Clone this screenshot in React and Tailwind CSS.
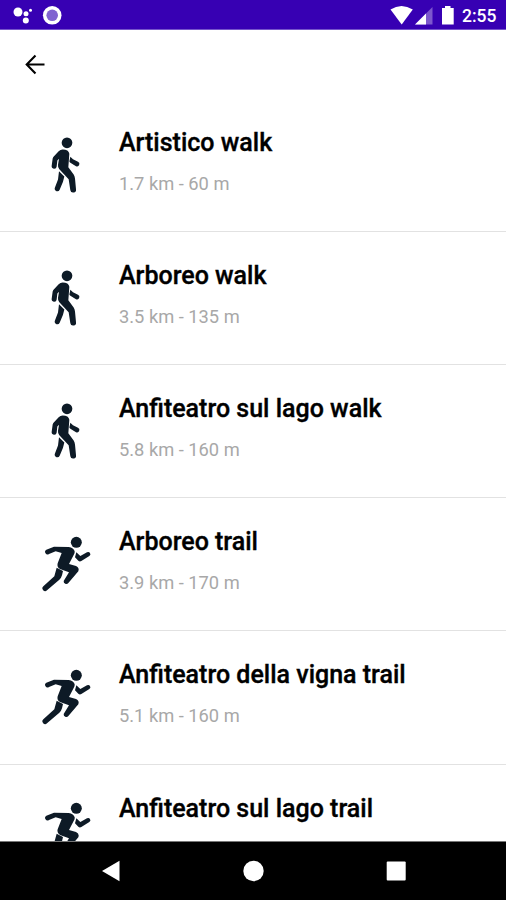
import React from "react";

const routes = [
  { name: "Artistico walk", info: "1.7 km - 60 m", kind: "walk" },
  { name: "Arboreo walk", info: "3.5 km - 135 m", kind: "walk" },
  { name: "Anfiteatro sul lago walk", info: "5.8 km - 160 m", kind: "walk" },
  { name: "Arboreo trail", info: "3.9 km - 170 m", kind: "trail" },
  { name: "Anfiteatro della vigna trail", info: "5.1 km - 160 m", kind: "trail" },
  { name: "Anfiteatro sul lago trail", kind: "trail" },
];

function WalkIcon() {
  return (
    <svg viewBox="0 2.5 210 240" className="h-20 w-[70px]" fill="#0d1a26">
      <circle cx="111" cy="53" r="16" />
      <path
        d="M98 73 Q116 73 118 86 L115 126 L131 148 Q134 153 135 160 L138 192 A8.500 8.500 0 0 1 121 195 L116 162 L88 132 Q83 127 84 119 L87 101 L82 106 L80 124 A7 7 0 0 1 65 122 L68 100 Q69 96 72 93 L86 78 Q91 73 98 73 Z"
      />
      <path d="M87 138 L103 154 L99 170 L89 194 A8 8 0 0 1 74 189 L84 163 Z" />
      <path d="M121 95 L129 102 L144 110 A7 7 0 0 1 138 123 L120 112 L118 109 Z" />
    </svg>
  );
}

function RunIcon() {
  return (
    <svg viewBox="0 0 210 240" className="h-20 w-[70px]" fill="#0d1a26">
      <circle cx="139" cy="52" r="16.500" />
      <path
        d="M72 65 L116 66 Q131 68 134 79 Q135 84 131 90 L117 117 L138 123 Q149 128 145 139 L115 174 A8 8 0 0 1 101 168 L117 142 L90 132 Q80 127 83 115 L95 84 L77 79 L57 87 A7 7 0 0 1 49 74 Z"
      />
      <path d="M80 128 L99 138 L96 151 Q94 159 88 164 L51 196 A8 8 0 0 1 40 184 L73 154 Z" />
      <path d="M139 82 L151 93 L171 82 A6.500 6.500 0 0 1 178 93 L154 108 Q149 111 145 107 L135 97 Z" />
    </svg>
  );
}

function StatusBar() {
  return (
    <header className="flex h-[30px] shrink-0 justify-between border-b border-[#7655cb] bg-[#3700b3]">
      <svg viewBox="0 0 120 30" className="h-[30px] w-[120px]" fill="#fff">
        <circle cx="18" cy="12" r="4.500" />
        <circle cx="26" cy="13.700" r="2.500" />
        <circle cx="30.500" cy="10.300" r="1.500" />
        <circle cx="25.800" cy="20.500" r="3" />
        <circle cx="52.200" cy="15.300" r="9.300" />
        <circle cx="52.200" cy="15.300" r="5.800" fill="#8063d0" />
      </svg>
      <div className="flex">
        <svg viewBox="380 0 82 30" className="h-[30px] w-[82px]" fill="#fff">
          <path d="M390.500 9.500 Q401.500 2.500 412.800 9.500 L401.700 24.500 Z" />
          <path d="M432.500 7 V24.500 H415 Z" fill="#7d57cd" />
          <path d="M426 13.500 V24.500 H415 Z" />
          <path d="M445 6 H450.500 V8 H453.700 V24.500 H442 V8 H445 Z" />
        </svg>
        <span className="w-11 pt-1 text-[17.500px] leading-6 font-medium text-white">2:55</span>
      </div>
    </header>
  );
}

function RouteRow({ route }) {
  return (
    <li className="flex h-[133.120px] border-b-[1.500px] border-[#e2e2e2] pl-[30px]">
      <div className="pt-[26.500px]">{route.kind === "walk" ? <WalkIcon /> : <RunIcon />}</div>
      <div className="pt-[28px] pl-[19px]">
        <h2 className="text-[25px] leading-8 font-medium whitespace-nowrap text-black [-webkit-text-stroke:0.35px_black]">
          {route.name}
        </h2>
        {route.info && <p className="pt-[13px] text-[18.300px] leading-6 text-[#a8a8a8]">{route.info}</p>}
      </div>
    </li>
  );
}

export default function App() {
  return (
    <div className="flex h-[900px] w-[506px] flex-col overflow-hidden bg-white font-[Roboto,sans-serif]">
      <StatusBar />
      <nav className="h-[69px] shrink-0 pt-[22px] pl-[23px]">
        <button aria-label="Back" className="block">
          <svg viewBox="0 0 24 24" className="size-6" fill="none" stroke="#000" strokeWidth="2.100">
            <path d="M21.500 12.500 H4 M12.500 3.500 L3.700 12.500 L12.500 21.500" />
          </svg>
        </button>
      </nav>
      <ul className="min-h-0 flex-1 overflow-hidden">
        {routes.map((route) => (
          <RouteRow key={route.name} route={route} />
        ))}
      </ul>
      <footer className="h-[59px] shrink-0 border-t border-[#777] bg-black">
        <svg viewBox="0 842 506 58" className="h-[58px] w-[506px]" fill="#fff">
          <path d="M102 871 L119.500 860.800 V881.200 Z" />
          <circle cx="253.500" cy="871" r="10.200" />
          <rect x="386.700" y="861.500" width="19" height="19" rx="1" />
        </svg>
      </footer>
    </div>
  );
}
